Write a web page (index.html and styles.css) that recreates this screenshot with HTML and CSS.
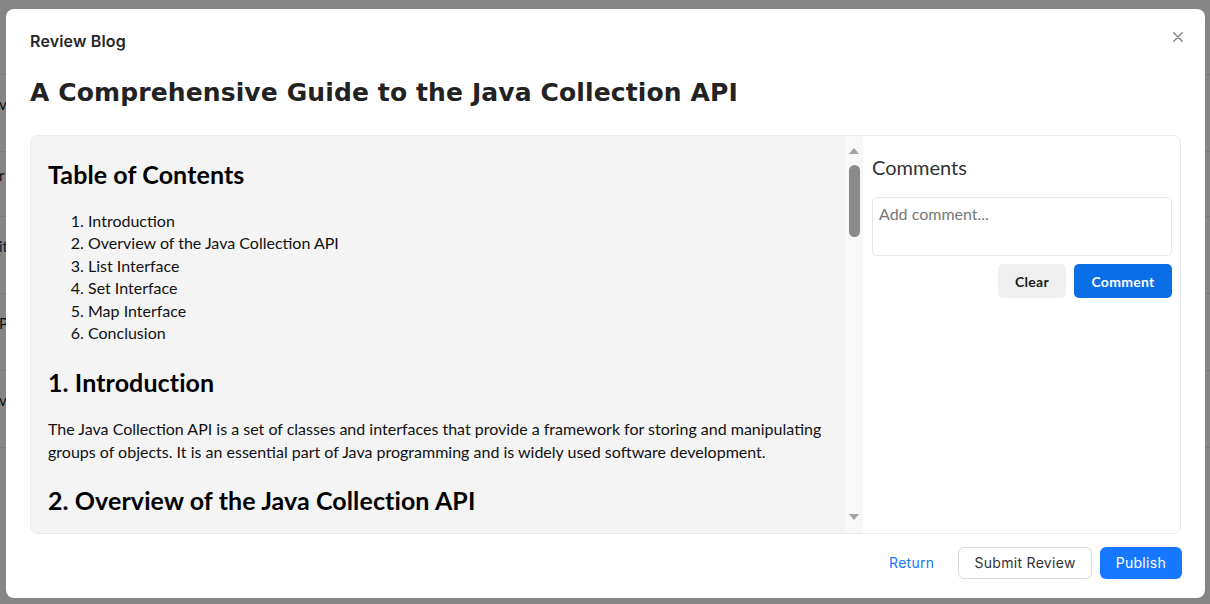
FILE: index.html
```html
<!DOCTYPE html>
<html lang="en">
<head>
<meta charset="utf-8">
<title>Review Blog</title>
<link rel="stylesheet" href="styles.css">
</head>
<body>
<div class="page">
  <div class="page-row row-head"></div>
  <div class="page-row row-a"><span class="frag">v</span></div>
  <div class="page-row row-b"><span class="frag">r</span></div>
  <div class="page-row row-a"><span class="frag link">it</span></div>
  <div class="page-row row-a"><span class="frag">P</span></div>
  <div class="page-row row-a"><span class="frag">v</span></div>
</div>
<div class="mask"></div>
<div class="modal-wrap">
  <div class="modal">
    <header class="modal-header">
      <span class="modal-title">Review Blog</span>
      <button class="modal-close" aria-label="Close">
        <svg width="10" height="10" viewBox="0 0 10 10"><path d="M0.8 0.8L9.2 9.2M9.2 0.8L0.8 9.2" stroke="currentColor" stroke-width="1.6" stroke-linecap="round"/></svg>
      </button>
    </header>
    <h1 class="post-title">A Comprehensive Guide to the Java Collection API</h1>
    <div class="review-box">
      <article class="article">
        <h2>Table of Contents</h2>
        <ol>
          <li>Introduction</li>
          <li>Overview of the Java Collection API</li>
          <li>List Interface</li>
          <li>Set Interface</li>
          <li>Map Interface</li>
          <li>Conclusion</li>
        </ol>
        <h2>1. Introduction</h2>
        <p>The Java Collection API is a set of classes and interfaces that provide a framework for storing and manipulating groups of objects. It is an essential part of Java programming and is widely used software development.</p>
        <h2>2. Overview of the Java Collection API</h2>
      </article>
      <div class="scrollbar">
        <span class="sb-arrow sb-up"></span>
        <span class="sb-thumb"></span>
        <span class="sb-track"></span>
        <span class="sb-arrow sb-down"></span>
      </div>
      <aside class="comments">
        <h3 class="comments-title">Comments</h3>
        <textarea class="comment-input" placeholder="Add comment..."></textarea>
        <div class="comment-actions">
          <button class="btn-clear">Clear</button>
          <button class="btn-comment">Comment</button>
        </div>
      </aside>
    </div>
    <footer class="modal-footer">
      <button class="fbtn fbtn-link">Return</button>
      <button class="fbtn fbtn-default">Submit Review</button>
      <button class="fbtn fbtn-primary">Publish</button>
    </footer>
  </div>
</div>
</body>
</html>
```
FILE: styles.css
```css
* { box-sizing: border-box; }
html, body { margin: 0; height: 100%; }
body {
  background: #fff;
  font-family: "Lato", "Liberation Sans", sans-serif;
  overflow: hidden;
}

/* background page (under mask) */
.page { display: flex; flex-direction: column; }
.page-row {
  display: flex;
  align-items: center;
  border-bottom: 1px solid #e6e6e6;
  font-size: 15px;
  color: #1f1f1f;
}
.row-head { height: 75px; }
.row-a { height: 77px; }
.row-b { height: 65px; }
.frag { margin-left: -1px; padding-bottom: 18px; }
.frag.link { color: #0d3f7a; }

.mask {
  position: fixed;
  inset: 0;
  background: rgba(0, 0, 0, 0.48);
}

.modal-wrap {
  position: fixed;
  inset: 0;
  padding: 9px 0 0 6px;
}
.modal {
  width: 1199px;
  height: 589px;
  background: #fff;
  border-radius: 8px;
  padding: 20px 24px 19px 24px;
  display: flex;
  flex-direction: column;
}

.modal-header {
  display: flex;
  justify-content: space-between;
  align-items: flex-start;
  height: 24px;
}
.modal-title {
  font-family: "Inter", sans-serif;
  font-weight: 600;
  font-size: 16px;
  line-height: 24px;
  letter-spacing: 0.15px;
  color: #262626;
}
.modal-close {
  border: 0;
  background: none;
  padding: 0;
  width: 10px;
  height: 10px;
  margin-right: -2px;
  margin-top: 3px;
  color: #8c8c8c;
  display: flex;
}

.post-title {
  margin: 23px 0 0;
  font-family: "DejaVu Sans", sans-serif;
  font-weight: 700;
  font-size: 25px;
  line-height: 34px;
  letter-spacing: 0.12px;
  color: #222;
}

.review-box {
  margin-top: 25px;
  height: 399px;
  border: 1px solid #eaeaea;
  border-radius: 8px;
  overflow: hidden;
  display: flex;
}

.article {
  width: 814px;
  flex: none;
  background: #f4f4f4;
  padding: 0 17px;
  overflow: hidden;
  color: #111;
  font-size: 16px;
  line-height: 22.4px;
}
.article h2 {
  margin: 23px 0 21px;
  font-size: 25px;
  line-height: 30px;
  font-weight: 700;
  letter-spacing: 0.1px;
  color: #000;
}
.article p + h2 { margin-top: 22px; }
.article ol { margin: 0; padding-left: 40px; }
.article p { margin: 0; }

.scrollbar {
  width: 18px;
  flex: none;
  background: #f8f8f8;
  display: flex;
  flex-direction: column;
  align-items: center;
  padding: 12px 0 13px;
}
.sb-arrow {
  width: 0;
  height: 0;
  border-left: 5px solid transparent;
  border-right: 5px solid transparent;
}
.sb-up { border-bottom: 6px solid #a3a3a3; }
.sb-down { border-top: 6px solid #a3a3a3; }
.sb-thumb {
  margin-top: 11px;
  width: 11px;
  height: 72px;
  border-radius: 6px;
  background: #8a8a8a;
}
.sb-track { flex: 1; }

.comments {
  flex: 1;
  padding: 19px 8px 0 9px;
  display: flex;
  flex-direction: column;
}
.comments-title {
  margin: 0;
  font-size: 20px;
  line-height: 24px;
  font-weight: 400;
  color: #333;
}
.comment-input {
  margin-top: 18px;
  height: 59px;
  width: 300px;
  border: 1px solid #e6e6e6;
  border-radius: 5px;
  padding: 4px 6px;
  font-family: "Lato", sans-serif;
  font-size: 16px;
  line-height: 24px;
  resize: none;
  background: #fff;
}
.comment-input::placeholder { color: #777; }
.comment-actions {
  margin-top: 8px;
  display: flex;
  justify-content: flex-end;
  gap: 8px;
}
.comment-actions button {
  height: 34px;
  border: 0;
  border-radius: 5px;
  font-family: "Lato", sans-serif;
  font-weight: 700;
  font-size: 14px;
  letter-spacing: 0.3px;
}
.btn-clear { width: 68px; background: #efefef; color: #1a1a1a; }
.btn-comment { width: 98px; background: #0a6ee6; color: #fff; }

.modal-footer {
  margin-top: 13px;
  display: flex;
  justify-content: flex-end;
  gap: 8px;
}
.fbtn {
  height: 32px;
  padding: 0 15px;
  border-radius: 6px;
  font-family: "Inter", sans-serif;
  font-size: 14px;
  letter-spacing: 0.3px;
  line-height: 30px;
  border: 1px solid transparent;
  background: none;
}
.fbtn-link { color: #1677ff; }
.fbtn-default { border-color: #d9d9d9; color: #333; background: #fff; }
.fbtn-primary { background: #1677ff; color: #fff; margin-right: -1px; }
```
